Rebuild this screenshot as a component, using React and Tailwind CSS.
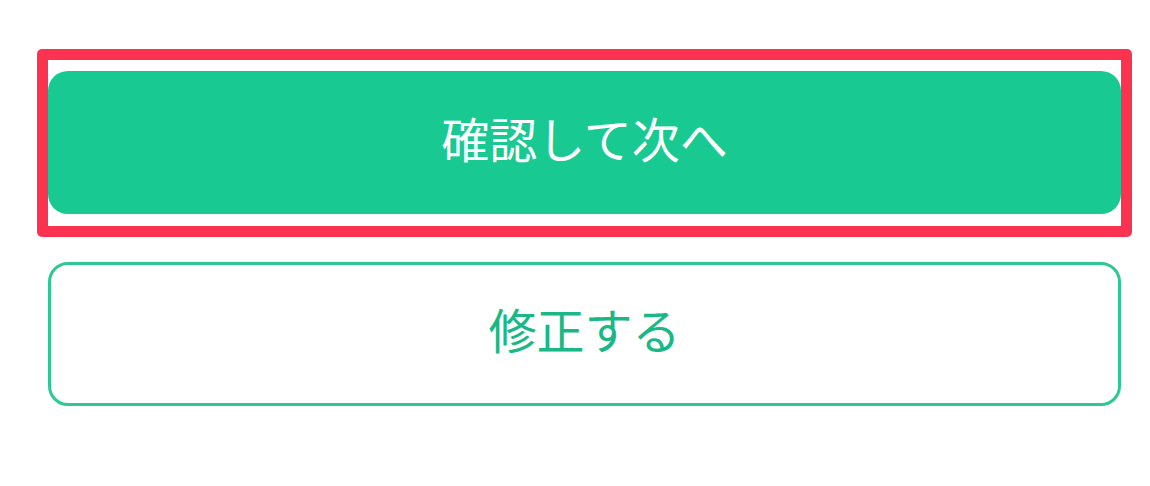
export default function App() {
  return (
    <div
      className="w-[1150px] h-[486px] bg-white pl-[37px] pr-[18px] pt-[49px]"
      style={{ fontFamily: '"Noto Sans CJK JP", "Noto Sans", sans-serif' }}
    >
      <div className="border-[11px] border-[#fc3350] rounded-[5px] pt-[11px] pb-[12px]">
        <button className="w-full h-[143px] flex items-center justify-center pb-[12px] rounded-[20px] bg-[#19c992] text-white text-[48px] leading-none font-normal">
          確認して次へ
        </button>
      </div>
      <button className="mx-[11px] mt-[25px] w-[1073px] h-[144px] flex items-center justify-center pb-[12px] rounded-[20px] border-[3px] border-[#2ec897] bg-white text-[#19b886] text-[48px] leading-none font-normal">
        修正する
      </button>
    </div>
  );
}
